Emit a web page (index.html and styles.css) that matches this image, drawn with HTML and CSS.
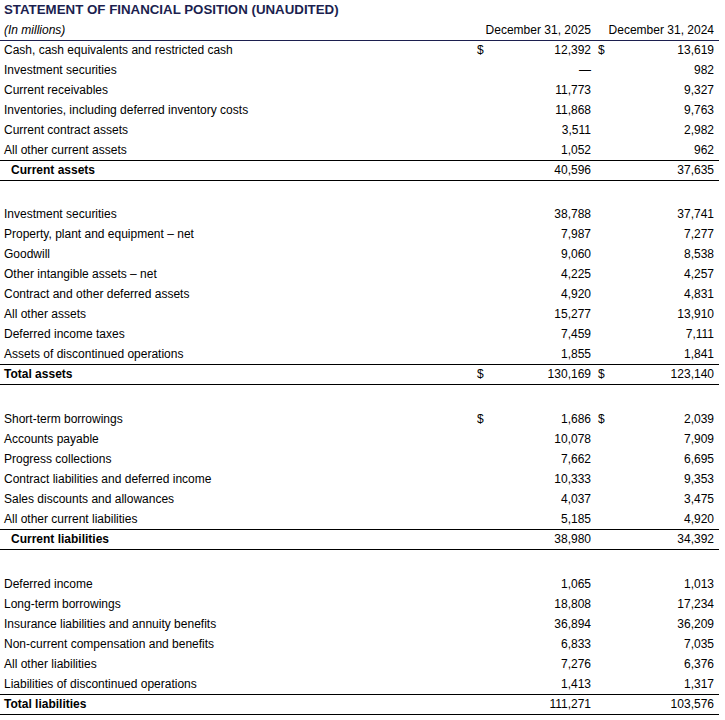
FILE: index.html
```html
<!DOCTYPE html>
<html lang="en">
<head>
<meta charset="utf-8">
<title>Statement of Financial Position</title>
<link rel="stylesheet" href="styles.css">
</head>
<body>
<div class="sheet">
  <div class="title">STATEMENT OF FINANCIAL POSITION (UNAUDITED)</div>
  <div class="row head">
    <div class="label unit">(In millions)</div>
    <div class="col c1"><span class="num">December 31, 2025</span></div>
    <div class="col c2"><span class="num">December 31, 2024</span></div>
  </div>

  <div class="row first">
    <div class="label">Cash, cash equivalents and restricted cash</div>
    <div class="col c1"><span class="cur">$</span><span class="num">12,392</span></div>
    <div class="col c2"><span class="cur">$</span><span class="num">13,619</span></div>
  </div>
  <div class="row"><div class="label">Investment securities</div><div class="col c1"><span class="num">—</span></div><div class="col c2"><span class="num">982</span></div></div>
  <div class="row"><div class="label">Current receivables</div><div class="col c1"><span class="num">11,773</span></div><div class="col c2"><span class="num">9,327</span></div></div>
  <div class="row"><div class="label">Inventories, including deferred inventory costs</div><div class="col c1"><span class="num">11,868</span></div><div class="col c2"><span class="num">9,763</span></div></div>
  <div class="row"><div class="label">Current contract assets</div><div class="col c1"><span class="num">3,511</span></div><div class="col c2"><span class="num">2,982</span></div></div>
  <div class="row"><div class="label">All other current assets</div><div class="col c1"><span class="num">1,052</span></div><div class="col c2"><span class="num">962</span></div></div>
  <div class="row sub"><div class="label indent">Current assets</div><div class="col c1"><span class="num">40,596</span></div><div class="col c2"><span class="num">37,635</span></div></div>

  <div class="spacer short"></div>

  <div class="row"><div class="label">Investment securities</div><div class="col c1"><span class="num">38,788</span></div><div class="col c2"><span class="num">37,741</span></div></div>
  <div class="row"><div class="label">Property, plant and equipment – net</div><div class="col c1"><span class="num">7,987</span></div><div class="col c2"><span class="num">7,277</span></div></div>
  <div class="row"><div class="label">Goodwill</div><div class="col c1"><span class="num">9,060</span></div><div class="col c2"><span class="num">8,538</span></div></div>
  <div class="row"><div class="label">Other intangible assets – net</div><div class="col c1"><span class="num">4,225</span></div><div class="col c2"><span class="num">4,257</span></div></div>
  <div class="row"><div class="label">Contract and other deferred assets</div><div class="col c1"><span class="num">4,920</span></div><div class="col c2"><span class="num">4,831</span></div></div>
  <div class="row"><div class="label">All other assets</div><div class="col c1"><span class="num">15,277</span></div><div class="col c2"><span class="num">13,910</span></div></div>
  <div class="row"><div class="label">Deferred income taxes</div><div class="col c1"><span class="num">7,459</span></div><div class="col c2"><span class="num">7,111</span></div></div>
  <div class="row"><div class="label">Assets of discontinued operations</div><div class="col c1"><span class="num">1,855</span></div><div class="col c2"><span class="num">1,841</span></div></div>
  <div class="row sub"><div class="label">Total assets</div><div class="col c1"><span class="cur">$</span><span class="num">130,169</span></div><div class="col c2"><span class="cur">$</span><span class="num">123,140</span></div></div>

  <div class="spacer"></div>

  <div class="row"><div class="label">Short-term borrowings</div><div class="col c1"><span class="cur">$</span><span class="num">1,686</span></div><div class="col c2"><span class="cur">$</span><span class="num">2,039</span></div></div>
  <div class="row"><div class="label">Accounts payable</div><div class="col c1"><span class="num">10,078</span></div><div class="col c2"><span class="num">7,909</span></div></div>
  <div class="row"><div class="label">Progress collections</div><div class="col c1"><span class="num">7,662</span></div><div class="col c2"><span class="num">6,695</span></div></div>
  <div class="row"><div class="label">Contract liabilities and deferred income</div><div class="col c1"><span class="num">10,333</span></div><div class="col c2"><span class="num">9,353</span></div></div>
  <div class="row"><div class="label">Sales discounts and allowances</div><div class="col c1"><span class="num">4,037</span></div><div class="col c2"><span class="num">3,475</span></div></div>
  <div class="row"><div class="label">All other current liabilities</div><div class="col c1"><span class="num">5,185</span></div><div class="col c2"><span class="num">4,920</span></div></div>
  <div class="row sub"><div class="label indent">Current liabilities</div><div class="col c1"><span class="num">38,980</span></div><div class="col c2"><span class="num">34,392</span></div></div>

  <div class="spacer"></div>

  <div class="row"><div class="label">Deferred income</div><div class="col c1"><span class="num">1,065</span></div><div class="col c2"><span class="num">1,013</span></div></div>
  <div class="row"><div class="label">Long-term borrowings</div><div class="col c1"><span class="num">18,808</span></div><div class="col c2"><span class="num">17,234</span></div></div>
  <div class="row"><div class="label">Insurance liabilities and annuity benefits</div><div class="col c1"><span class="num">36,894</span></div><div class="col c2"><span class="num">36,209</span></div></div>
  <div class="row"><div class="label">Non-current compensation and benefits</div><div class="col c1"><span class="num">6,833</span></div><div class="col c2"><span class="num">7,035</span></div></div>
  <div class="row"><div class="label">All other liabilities</div><div class="col c1"><span class="num">7,276</span></div><div class="col c2"><span class="num">6,376</span></div></div>
  <div class="row"><div class="label">Liabilities of discontinued operations</div><div class="col c1"><span class="num">1,413</span></div><div class="col c2"><span class="num">1,317</span></div></div>
  <div class="row sub"><div class="label">Total liabilities</div><div class="col c1"><span class="num">111,271</span></div><div class="col c2"><span class="num">103,576</span></div></div>
</div>
</body>
</html>
```

FILE: styles.css
```css
html, body {
  margin: 0;
  padding: 0;
  background: #ffffff;
}

body {
  font-family: "Liberation Sans", Arial, sans-serif;
  font-size: 12px;
  color: #000000;
}

.sheet {
  width: 719px;
}

.title {
  height: 20px;
  line-height: 20px;
  padding-left: 4px;
  font-size: 13.3px;
  font-weight: bold;
  color: #1c1f4f;
  white-space: nowrap;
}

.row {
  display: flex;
  box-sizing: border-box;
  height: 20px;
  line-height: 20px;
  white-space: nowrap;
}

.row.first {
  border-top: 1px solid #1c1f4f;
  line-height: 19px;
}

.row.sub {
  height: 21px;
  line-height: 19px;
  border-top: 1px solid #000000;
  border-bottom: 1px solid #000000;
}

.row.sub .label {
  font-weight: bold;
}

.label {
  flex: 1;
  padding-left: 4px;
  overflow: hidden;
}

.label.indent {
  padding-left: 11px;
}

.unit {
  font-style: italic;
}

.col {
  display: flex;
  justify-content: space-between;
  box-sizing: border-box;
}

.c1 {
  width: 123px;
  padding: 0 4px 0 5px;
}

.c2 {
  width: 124px;
  padding: 0 5px 0 3px;
}

.num {
  margin-left: auto;
}

.spacer {
  height: 24px;
}

.spacer.short {
  height: 23px;
}
```
